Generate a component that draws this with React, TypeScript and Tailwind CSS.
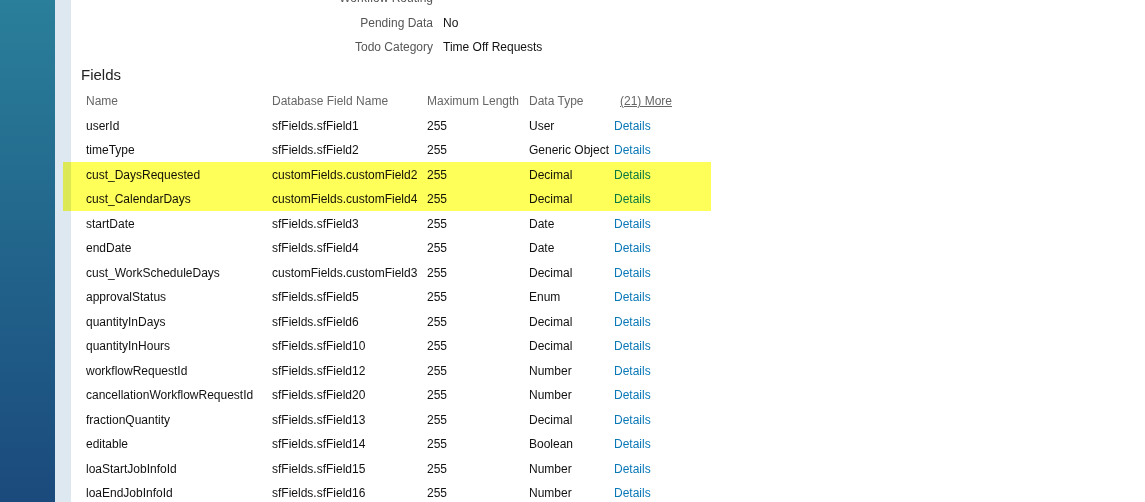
import React from "react";

type Field = { name: string; db: string; len: string; type: string; hl?: boolean };

const fields: Field[] = [
  { name: "userId", db: "sfFields.sfField1", len: "255", type: "User" },
  { name: "timeType", db: "sfFields.sfField2", len: "255", type: "Generic Object" },
  { name: "cust_DaysRequested", db: "customFields.customField2", len: "255", type: "Decimal", hl: true },
  { name: "cust_CalendarDays", db: "customFields.customField4", len: "255", type: "Decimal", hl: true },
  { name: "startDate", db: "sfFields.sfField3", len: "255", type: "Date" },
  { name: "endDate", db: "sfFields.sfField4", len: "255", type: "Date" },
  { name: "cust_WorkScheduleDays", db: "customFields.customField3", len: "255", type: "Decimal" },
  { name: "approvalStatus", db: "sfFields.sfField5", len: "255", type: "Enum" },
  { name: "quantityInDays", db: "sfFields.sfField6", len: "255", type: "Decimal" },
  { name: "quantityInHours", db: "sfFields.sfField10", len: "255", type: "Decimal" },
  { name: "workflowRequestId", db: "sfFields.sfField12", len: "255", type: "Number" },
  { name: "cancellationWorkflowRequestId", db: "sfFields.sfField20", len: "255", type: "Number" },
  { name: "fractionQuantity", db: "sfFields.sfField13", len: "255", type: "Decimal" },
  { name: "editable", db: "sfFields.sfField14", len: "255", type: "Boolean" },
  { name: "loaStartJobInfoId", db: "sfFields.sfField15", len: "255", type: "Number" },
  { name: "loaEndJobInfoId", db: "sfFields.sfField16", len: "255", type: "Number" },
];

const props = [
  { label: "Workflow Routing", value: "" },
  { label: "Pending Data", value: "No" },
  { label: "Todo Category", value: "Time Off Requests" },
];

export default function App() {
  return (
    <div
      className="flex h-[502px] w-[1145px] overflow-hidden bg-white text-[12px] text-[#111]"
      style={{ fontFamily: '"Liberation Sans", Arial, sans-serif' }}
    >
      <div className="w-[55px] shrink-0 bg-gradient-to-b from-[#2a7f9a] to-[#1b4a7c]" />
      <div className="w-[16px] shrink-0 bg-[#dde8f0]" />

      <div className="relative flex-1">
        {/* highlighter over the two custom rows */}
        <div className="pointer-events-none absolute left-[-8px] top-[162.25px] h-[49px] w-[648px] bg-[#ffff5a] mix-blend-multiply" />

        <div className="mt-[-14.25px]">
          {props.map((p) => (
            <div key={p.label} className="flex h-[24.5px] items-center">
              <div className="w-[362px] text-right text-[#555]">{p.label}</div>
              <div className="pl-[10px]">{p.value}</div>
            </div>
          ))}
        </div>

        <div className="h-[29.5px] pl-[10px] pt-[7px] text-[15px] leading-[18px] text-[#222]">Fields</div>

        <div className="pl-[15px]">
          <div className="flex h-[24.5px] items-center text-[#666]">
            <div className="w-[186px]">Name</div>
            <div className="w-[155px]">Database Field Name</div>
            <div className="w-[102px]">Maximum Length</div>
            <div className="w-[85px]">Data Type</div>
            <div className="pl-[6px] underline">(21) More</div>
          </div>
          {fields.map((f) => (
            <div key={f.name} className="flex h-[24.5px] items-center">
              <div className="w-[186px]">{f.name}</div>
              <div className="w-[155px]">{f.db}</div>
              <div className="w-[102px]">{f.len}</div>
              <div className="w-[85px] whitespace-nowrap">{f.type}</div>
              <a className="text-[#0a78b6]">Details</a>
            </div>
          ))}
        </div>
      </div>
    </div>
  );
}
